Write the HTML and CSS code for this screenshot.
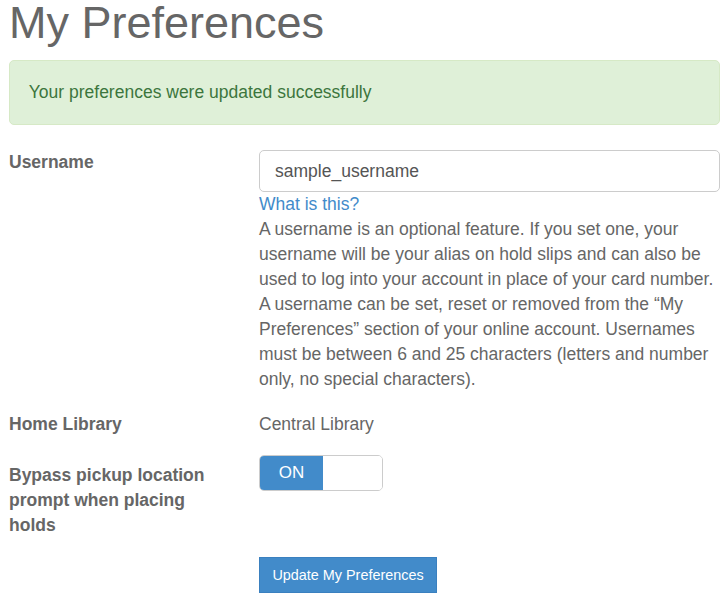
FILE: index.html
```html
<!DOCTYPE html>
<html lang="en">
<head>
<meta charset="utf-8">
<title>My Preferences</title>
<link rel="stylesheet" href="styles.css">
</head>
<body>
<h1 class="page-title">My Preferences</h1>
<div class="alert">Your preferences were updated successfully</div>
<form class="prefs">
  <div class="row row-username">
    <label class="row-label" for="username">Username</label>
    <div class="row-control">
      <input id="username" class="text-input" type="text" value="sample_username">
      <a class="help-link" href="#">What is this?</a>
      <p class="help-text">A username is an optional feature. If you set one, your username will be your alias on hold slips and can also be used to log into your account in place of your card number. A username can be set, reset or removed from the “My Preferences” section of your online account. Usernames must be between 6 and 25 characters (letters and number only, no special characters).</p>
    </div>
  </div>
  <div class="row">
    <div class="row-label">Home Library</div>
    <div class="row-control">Central Library</div>
  </div>
  <div class="row">
    <div class="row-label row-label-padded">Bypass pickup location prompt when placing holds</div>
    <div class="row-control">
      <div class="toggle"><span class="toggle-on">ON</span><span class="toggle-off"></span></div>
    </div>
  </div>
  <div class="row">
    <div class="row-label"></div>
    <div class="row-control">
      <button type="button" class="btn">Update My Preferences</button>
    </div>
  </div>
</form>
</body>
</html>
```
FILE: styles.css
```css
html, body {
  margin: 0;
  background: #fff;
}
body {
  padding: 0 7px 0 9px;
  font-family: "Liberation Sans", Arial, sans-serif;
  font-size: 17.5px;
  line-height: 25px;
  color: #666;
}
.page-title {
  margin: 0 0 15px;
  font-size: 45px;
  line-height: 45px;
  font-weight: normal;
  color: #666;
}
.alert {
  background: #dff0d8;
  border: 1px solid #d6e9c6;
  border-radius: 5px;
  padding: 18.75px 18.75px;
  color: #3c763d;
  margin-bottom: 25.5px;
}
.prefs {
  margin: 0;
}
.row {
  display: grid;
  grid-template-columns: 250px 1fr;
  margin-bottom: 19px;
}
.row-username {
  margin-bottom: 19.5px;
}
.row-label {
  font-weight: bold;
  width: 212px;
}
.row-label-padded {
  padding-top: 7.5px;
}
.row-control {
  min-width: 0;
}
.text-input {
  display: block;
  box-sizing: border-box;
  width: 100%;
  height: 42px;
  margin: 0;
  padding: 0 15px;
  border: 1px solid #ccc;
  border-radius: 5px;
  font-family: "Liberation Sans", Arial, sans-serif;
  font-size: 17.5px;
  color: #555;
  background: #fff;
}
.help-link {
  display: block;
  color: #428bca;
  text-decoration: none;
}
.help-text {
  margin: 0;
}
.toggle {
  display: flex;
  box-sizing: border-box;
  width: 124px;
  height: 36px;
  margin-top: -0.5px;
  border: 1px solid #ccc;
  border-radius: 5px;
  overflow: hidden;
}
.toggle-on {
  width: 63px;
  background: #428bca;
  color: #fff;
  text-align: center;
  line-height: 34px;
  font-size: 17px;
}
.toggle-off {
  flex: 1;
  background: #fff;
}
.btn {
  box-sizing: border-box;
  height: 36px;
  width: 178px;
  padding: 0;
  border: 1px solid #3a80bf;
  border-radius: 0;
  background: #428bca;
  color: #fff;
  font-family: "Liberation Sans", Arial, sans-serif;
  font-size: 14.4px;
  text-align: center;
}
```
